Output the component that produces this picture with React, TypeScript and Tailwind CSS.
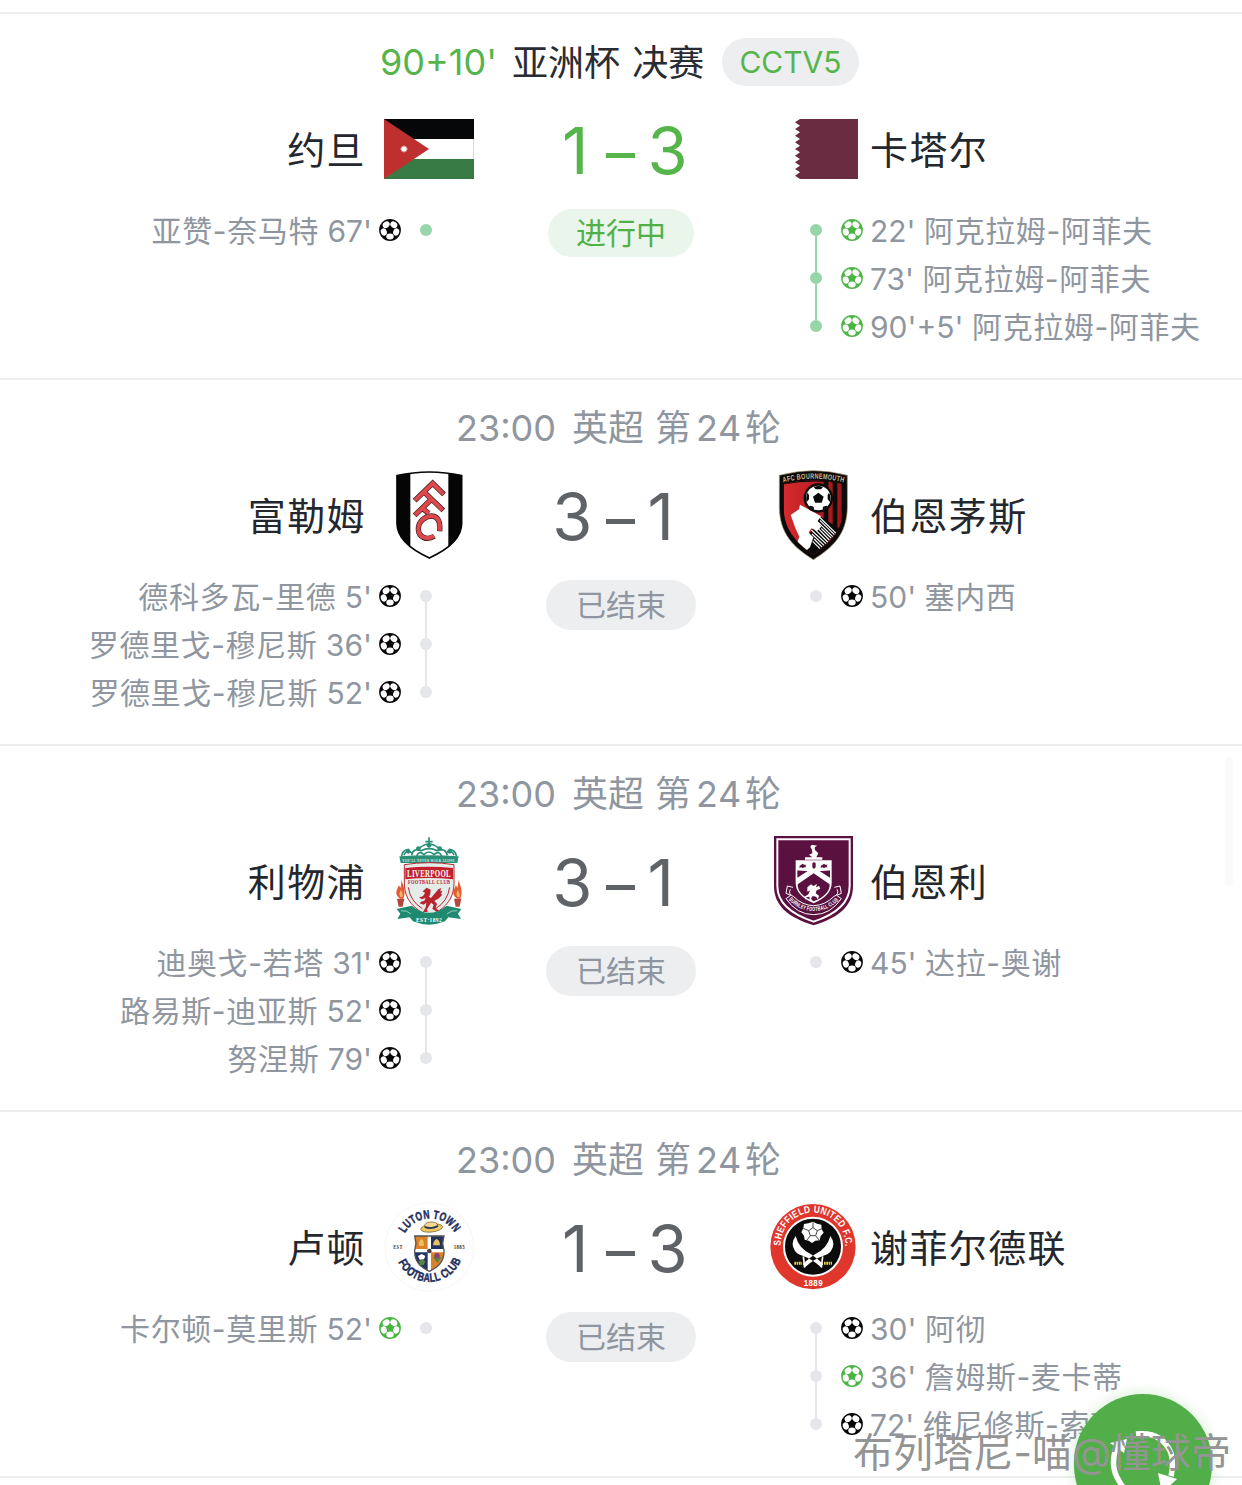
import type { ReactNode } from 'react';

type Goal = { minute: string; player: string; green?: boolean };
type Team = { name: string; logo: ReactNode; goals: Goal[] };
type Match = {
    id: number;
    live?: boolean;
    score: [string, string];
    home: Team;
    away: Team;
};

function Jordan() {
    return (
        <svg viewBox="42 222 270 270" className="h-[90px] w-[90px]">
            <path fill="#050708" d="M42 267h270v60H42z" />
            <path fill="#fff" d="M42 327h270v60H42z" />
            <path fill="#387a43" d="M42 387h270v60H42z" />
            <path stroke="#bbb" strokeWidth="2" d="M311 327v60" />
            <path fill="#be3030" d="M42 267l135 90-135 90z" />
            <path stroke="#fff" strokeWidth="4" d="M102 347v20M92 357h20M95 350l14 14M109 350l-14 14" />
            <circle cx="102" cy="357" r="6" fill="#fff" />
        </svg>
    );
}

function Qatar() {
    return (
        <svg viewBox="1194 222 270 270" className="h-[90px] w-[90px]">
            <path
                fill="#692c41"
                d="M1464 267H1290l-15 10 15 10-15 10 15 10-15 10 15 10-15 10 15 10-15 10 15 10-15 10 15 10-15 10 15 10-15 10 15 10-15 10 15 10H1464z"
            />
        </svg>
    );
}

function Fulham() {
    return (
        <svg viewBox="12 30 270 270" className="h-[90px] w-[90px]">
            <defs>
                <clipPath id="fulham">
                    <path d="M51 47Q100 36 148 36T245 47V190C245 236 205 268 148 294C91 268 51 236 51 190z" />
                </clipPath>
            </defs>
            <g clipPath="url(#fulham)">
                <path fill="#fff" d="M40 30h220v270H40z" />
                <path fill="#050505" d="M40 30h51v270H40zM205 30h51v270h-51z" />
            </g>
            <path
                fill="none"
                stroke="#050505"
                strokeWidth="5"
                d="M51 47Q100 36 148 36T245 47V190C245 236 205 268 148 294C91 268 51 236 51 190z"
            />
            <g fill="none">
                <path stroke="#3a2020" strokeWidth="16" d="M104 122L158 70L192 103M131 95L190 151M104 166L152 120M126 144L146 160" />
                <path stroke="#3a2020" strokeWidth="16" d="M163 229C140 243 116 231 115 208C114 184 136 168 155 168C174 169 182 185 179 214" />
                <path stroke="#e0474c" strokeWidth="12" d="M105 121L158 70L190 102M131 95L188 150M105 165L152 120M126 143L146 160" />
                <path stroke="#e0474c" strokeWidth="12" d="M162 228C140 242 116 231 115 208C114 184 136 168 155 168C174 169 182 185 179 212" />
            </g>
        </svg>
    );
}

function Bournemouth() {
    return (
        <svg viewBox="9 30 270 270" className="h-[90px] w-[90px]">
            <defs>
                <clipPath id="bmth">
                    <path d="M56 72Q145 50 235 72V140C235 210 196 248 145 284C94 248 56 210 56 140z" />
                </clipPath>
                <linearGradient id="bmthRed" x1="0" x2="1">
                    <stop offset="0" stopColor="#d92b2f" />
                    <stop offset="1" stopColor="#9c1519" />
                </linearGradient>
                <path id="bmthArc" d="M52 68Q147 44 240 68" />
            </defs>
            <path fill="#0b0a0a" stroke="#a99873" strokeWidth="2" d="M43 46Q145 18 247 46V140C247 220 205 262 145 299C85 262 43 220 43 140z" />
            <g clipPath="url(#bmth)">
                <path fill="url(#bmthRed)" d="M50 50h190v250H50z" />
                <path fill="#0b0a0a" d="M176 60h14v140h-14zM203 60h14v160h-14zM230 60h10v160h-10z" />
                <path fill="#0b0a0a" d="M50 50h190v22Q145 56 50 74z" />
                <path fill="#0b0a0a" d="M160 166l64 40-80 90-30-30z" />
                <path fill="#fff" d="M77 165l25-17 3-14 28 15 35 20-10 14 11 17-13 13-17-8-8 13 14 14-10 30-16 14-24-24 8-22-12-26z" />
                <path
                    stroke="#fff"
                    strokeWidth="3.500"
                    d="M163 171l50 49M165 181l43 43M160 187l43 43M169 205l29 29M160 206l33 34M148 206l40 40M139 210l44 41M141 222l36 34M147 237l24 24M143 244l22 22"
                />
            </g>
            <circle cx="160" cy="114" r="44" fill="#0b0a0a" />
            <circle cx="160" cy="114" r="37" fill="#fff" />
            <path
                fill="#0b0a0a"
                d="M160 98l16 12-6 18h-20l-6-18zM146 81q14-6 28 0l-6 7h-16zM192 98q7 12 3 28l-7-8v-13zM128 98q-7 12-3 28l7-8v-13zM136 137l10 3 1 9q-11-2-15-10zM184 137l-10 3-1 9q11-2 15-10z"
            />
            <text fill="#cdbb91" fontSize="23" fontWeight="700" className="font-['Liberation_Sans']">
                <textPath href="#bmthArc" startOffset="3" textLength="184" lengthAdjust="spacingAndGlyphs">AFC BOURNEMOUTH</textPath>
            </text>
        </svg>
    );
}

function Liverpool() {
    return (
        <svg viewBox="-3 18 270 270" className="h-[90px] w-[90px]">
            <g fill="none" stroke="#2a8f77" strokeWidth="5">
                <path d="M132 22v30M121 35h22M80 76Q84 52 108 62Q132 50 157 62Q181 52 187 76M57 76Q62 58 80 68M207 76Q202 58 185 68" />
                <path d="M95 78Q102 60 117 74Q132 58 147 74Q162 60 170 78M104 54Q132 30 160 54M50 78q2-18 22-20M214 78q-2-18-22-20" />
            </g>
            <g fill="#2a8f77">
                <circle cx="132" cy="46" r="7" />
                <circle cx="100" cy="56" r="7" />
                <circle cx="164" cy="56" r="7" />
                <circle cx="70" cy="64" r="7" />
                <circle cx="194" cy="64" r="7" />
            </g>
            <path fill="#2a8f77" d="M43 79Q132 72 221 79l-4 20H47z" />
            <text
                x="52"
                y="95"
                fill="#dff1ec"
                fontSize="15"
                fontWeight="700"
                textLength="158"
                lengthAdjust="spacingAndGlyphs"
                className="font-['Liberation_Serif']"
            >
                YOU'LL NEVER WALK ALONE
            </text>
            <path fill="#e4ecea" stroke="#b4272f" strokeWidth="3" d="M58 104Q132 92 207 104V160C207 210 175 240 132 258C90 240 58 210 58 160z" />
            <path fill="#c1202c" d="M61 114Q132 106 204 114v34Q132 140 61 148z" />
            <text
                x="66"
                y="142"
                fill="#fff"
                fontSize="32"
                fontWeight="700"
                textLength="132"
                lengthAdjust="spacingAndGlyphs"
                className="font-['Liberation_Serif']"
            >
                LIVERPOOL
            </text>
            <text
                x="69"
                y="163"
                fill="#c1202c"
                fontSize="20"
                fontWeight="700"
                textLength="127"
                lengthAdjust="spacingAndGlyphs"
                className="font-['Liberation_Serif']"
            >
                FOOTBALL CLUB
            </text>
            <path
                fill="#b9252f"
                d="M113 184l12-11 12 6-1 13-4 8 6 4 22-26 8-4-2 10 6-2-4 10 4 2-12 12-12 6 8 10-4 12 14 12-8 2-16-12 4-12-8-6-12 20 2 8h-14l8-14 2-14-8 6-12-4 4-5 10-3 4-8-12 4-8-6 8-2 6-4 4-8-8-4z"
            />
            <path fill="none" stroke="#c1202c" strokeWidth="3" d="M70 172Q76 214 112 236M194 172Q188 214 152 236" />
            {[47, 218].map((x) => (
                <g key={x} transform={`translate(${x} 0)`}>
                    <path fill="#e45b32" d="M-2 206C-22 190-10 180-5 165C0 176 0 180 2 150C10 172 16 186 8 206z" />
                    <path fill="#f3b263" d="M0 202q-8-10 1-22 8 14 4 22z" />
                    <path fill="#b5473a" d="M-11 206h22l-5 24h-12z" />
                </g>
            ))}
            <path fill="#1f8a70" d="M35 237l45-10Q132 270 185 227l44 10-10 14 9 16-38-5-10 12q-48 20-96 0l-10-12-37 5 9-16z" />
            <path fill="none" stroke="#b4dcd1" strokeWidth="2.500" d="M48 242q18-2 30 10M216 242q-18-2-30 10" />
            <text
                x="93"
                y="276"
                fill="#fff"
                fontSize="20"
                fontWeight="700"
                textLength="78"
                lengthAdjust="spacingAndGlyphs"
                className="font-['Liberation_Serif']"
            >
                EST·1892
            </text>
        </svg>
    );
}

function Burnley() {
    return (
        <svg viewBox="9 18 270 270" className="h-[90px] w-[90px]">
            <defs>
                <path id="burnleyArc" d="M68 206Q100 243 146 243T226 206" />
            </defs>
            <path fill="#5b1140" d="M27 18h237v150C264 228 222 262 146 286C70 262 27 228 27 168z" />
            <path fill="none" stroke="#fff" strokeWidth="6" d="M37 28h217v140C254 220 212 253 146 275C80 253 37 220 37 168z" />
            <path fill="#fff" d="M92 91h108v68q0 37-54 61-54-24-54-61z" />
            <path fill="#5b1140" d="M97 121l49-1 49 1v22l-49-31-49 31zM98 156l48-31 48 31v8q0 30-48 50-48-20-48-50z" />
            <path fill="#fff" d="M96 148l50-33 50 33v16l-50-34-50 34z" />
            <path fill="#fff" d="M97 96h98v25l-49 4-49-4z" />
            <path
                fill="#5b1140"
                d="M104 107l5-3 4-3 4 3h7l-3 4 3 4h-7l-4 3-4-3-6 1zM142 100l5-4 5 4v12l-5 5-5-5zM168 107l5-3 4-3 4 3h7l-3 4 3 4h-7l-4 3-4-3-6 1z"
            />
            <path
                fill="#fff"
                d="M136 50q4-9 12-4l9 1-8 5 1 8 10 10-6 12h-12l-10-8 10-4-1-10zM120 82h52v7h-52zM127 172l11-9 7 5 11-6-3 10 9-4 4 8-11 5-3 9 10 7-3 11-6-8-10-2-5 8 6 8-10-3-1-11-9 2-2 7-4-8 12-8 5-11-8 3z"
            />
            <path
                fill="none"
                stroke="#fff"
                strokeWidth="3"
                d="M84 172l-17-4-4 22 14 6-14 10q33 48 83 48t83-48l-14-10 14-6-4-22-17 4M76 178q-8 14 10 22 26 26 60 27 34-1 60-27 18-8 10-22"
            />
            <text fill="#fff" fontSize="18" fontWeight="700" className="font-['Liberation_Sans']">
                <textPath href="#burnleyArc" startOffset="4" textLength="170" lengthAdjust="spacingAndGlyphs">BURNLEY FOOTBALL CLUB</textPath>
            </text>
        </svg>
    );
}

function Luton() {
    return (
        <svg viewBox="12 6 270 270" className="h-[90px] w-[90px]">
            <defs>
                <path id="lutonTop" d="M74 101A86 86 0 0 1 226 101" />
                <path id="lutonBottom" d="M54 184A102 102 0 0 0 243 180" />
                <clipPath id="lutonShield">
                    <path d="M104 108h88l-4 22 4 22q2 42-44 62-46-20-44-62l4-22z" />
                </clipPath>
            </defs>
            <circle cx="148" cy="141" r="133" fill="#fff" stroke="#f1f1f2" strokeWidth="2" />
            <g fill="#1e2e5c" stroke="#1e2e5c" strokeWidth="1.500" fontSize="36" fontWeight="700" className="font-['Liberation_Sans']">
                <text>
                    <textPath href="#lutonTop" startOffset="1" textLength="182" lengthAdjust="spacingAndGlyphs">LUTON TOWN</textPath>
                </text>
                <text>
                    <textPath href="#lutonBottom" startOffset="2" textLength="240" lengthAdjust="spacingAndGlyphs">FOOTBALL CLUB</textPath>
                </text>
            </g>
            <g fill="#333" fontSize="17" fontWeight="700" className="font-['Liberation_Serif']">
                <text x="40" y="147" textLength="28" lengthAdjust="spacingAndGlyphs">EST</text>
                <text x="221" y="147" textLength="34" lengthAdjust="spacingAndGlyphs">1885</text>
            </g>
            <g clipPath="url(#lutonShield)">
                <path fill="#dd8129" d="M100 104h48v48h-48zM148 152h48v64h-48z" />
                <path fill="#22345f" d="M148 104h48v48h-48zM100 152h48v64h-48z" />
                <path stroke="#fff" strokeWidth="10" d="M148 104v114M100 152h96" />
            </g>
            <path fill="none" stroke="#555" strokeWidth="4" d="M104 108h88l-4 22 4 22q2 42-44 62-46-20-44-62l4-22z" />
            <path fill="#e8c05c" d="M117 138q-2-16 8-21 8 5 6 21zM159 136q2-17 11-19 9 2 10 19z" />
            <path fill="#fff" d="M114 168l11-6 11 6-4 10-13 1z" />
            <path fill="#598442" d="M116 184q10-9 20 0l-5 11h-10zM158 172q11-4 26 0l-11 17z" />
            <circle cx="171" cy="167" r="8" fill="#8b426e" />
            <circle cx="148" cy="153" r="7" fill="#4b3d35" />
            <ellipse cx="155" cy="84" rx="33" ry="12" fill="#efc85f" stroke="#695022" strokeWidth="2" transform="rotate(-7 155 84)" />
            <path fill="#f4da91" stroke="#695022" strokeWidth="2" d="M134 80q-1-13 18-14 19-1 22 11-19 10-40 3z" />
            <path fill="none" stroke="#263660" strokeWidth="5" d="M134 81q20 8 40-3" />
        </svg>
    );
}

function Sheffield() {
    return (
        <svg viewBox="18 21 270 270" className="h-[90px] w-[90px]">
            <defs>
                <path id="sheffTop" d="M56 154A97 97 0 1 1 248 169" />
            </defs>
            <circle cx="153" cy="155" r="128" fill="#df372c" />
            <circle cx="153" cy="155" r="87" fill="#0b0b0b" stroke="#fff" strokeWidth="6" />
            <text fill="#fff" fontSize="30" fontWeight="700" className="font-['Liberation_Sans']">
                <textPath href="#sheffTop" startOffset="2" textLength="312" lengthAdjust="spacingAndGlyphs">SHEFFIELD UNITED F.C.</textPath>
            </text>
            <text
                x="125"
                y="274"
                fill="#fff"
                fontSize="27"
                fontWeight="700"
                textLength="58"
                lengthAdjust="spacingAndGlyphs"
                className="font-['Liberation_Sans']"
            >
                1889
            </text>
            <path fill="#fff" d="M153 80l12 6 13 3 1 13 6 11-9 10-3 13-13 1-10 7-10-7-12-3-2-12-8-10 6-12 2-13 13-2z" />
            <path
                fill="none"
                stroke="#222"
                strokeWidth="2.500"
                d="M153 98l13 9-5 15h-16l-5-15zM153 98V82M166 107l16-7M161 122l10 13M145 122l-10 13M140 107l-16-7"
            />
            <path
                fill="#fff"
                d="M101 123Q84 146 99 168Q106 178 124 183Q152 193 176 216L184 207Q166 191 147 178Q110 160 101 123zM205 123Q222 146 207 168Q200 178 182 183Q154 193 130 216L122 207Q140 191 159 178Q196 160 205 123z"
            />
            <path stroke="#fff" strokeWidth="5" d="M124 184l4 34M182 184l-4 34" />
            <path stroke="#e6d437" strokeWidth="9" strokeDasharray="5 2" d="M97 205h23M186 205h24" />
        </svg>
    );
}

function Ball({ green }: { green?: boolean }) {
    return (
        <svg viewBox="-11 -11 22 22" className={`h-[22px] w-[22px] shrink-0 ${green ? 'text-[#4bb544]' : 'text-[#080808]'}`}>
            <circle r="10.900" fill="currentColor" />
            {[0, 72, 144, 216, 288].map((deg) => (
                <ellipse key={deg} transform={`rotate(${deg})`} cy="6.500" rx="3.700" ry="3" fill="#fff" />
            ))}
        </svg>
    );
}

function Goals({ goals, live, side }: { goals: Goal[]; live?: boolean; side: 'home' | 'away' }) {
    const dot = live ? 'bg-[#96d6a8]' : 'bg-[#e5e6ea]';
    return (
        <ul>
            {goals.map((goal, i) => (
                <li
                    key={i}
                    className={`flex h-12 items-center text-[30px] leading-[48px] whitespace-nowrap text-[#8f96a0] ${side === 'home' ? 'flex-row-reverse pr-[42px]' : 'pl-[42px]'}`}
                >
                    <span className="flex h-12 w-3 shrink-0 flex-col items-center">
                        <i className={`w-0.5 flex-1 ${i > 0 ? dot : ''}`} />
                        <i className={`h-3 w-3 rounded-full ${dot}`} />
                        <i className={`w-0.5 flex-1 ${i < goals.length - 1 ? dot : ''}`} />
                    </span>
                    <span className={side === 'home' ? 'mr-[19px]' : 'ml-[19px]'}>
                        <Ball green={goal.green} />
                    </span>
                    {side === 'home' ? (
                        <span className="mr-[7px] pt-px">
                            <span className="tracking-[0.6px]">{goal.player}</span> {goal.minute}
                        </span>
                    ) : (
                        <span className="ml-[7px] pt-px">
                            {goal.minute} <span className="tracking-[0.6px]">{goal.player}</span>
                        </span>
                    )}
                </li>
            ))}
        </ul>
    );
}

const matches: Match[] = [
    {
        id: 1,
        live: true,
        score: ['1', '3'],
        home: { name: '约旦', logo: <Jordan />, goals: [{ minute: "67'", player: '亚赞-奈马特' }] },
        away: {
            name: '卡塔尔',
            logo: <Qatar />,
            goals: [
                { minute: "22'", player: '阿克拉姆-阿菲夫', green: true },
                { minute: "73'", player: '阿克拉姆-阿菲夫', green: true },
                { minute: "90'+5'", player: '阿克拉姆-阿菲夫', green: true },
            ],
        },
    },
    {
        id: 2,
        score: ['3', '1'],
        home: {
            name: '富勒姆',
            logo: <Fulham />,
            goals: [
                { minute: "5'", player: '德科多瓦-里德' },
                { minute: "36'", player: '罗德里戈-穆尼斯' },
                { minute: "52'", player: '罗德里戈-穆尼斯' },
            ],
        },
        away: { name: '伯恩茅斯', logo: <Bournemouth />, goals: [{ minute: "50'", player: '塞内西' }] },
    },
    {
        id: 3,
        score: ['3', '1'],
        home: {
            name: '利物浦',
            logo: <Liverpool />,
            goals: [
                { minute: "31'", player: '迪奥戈-若塔' },
                { minute: "52'", player: '路易斯-迪亚斯' },
                { minute: "79'", player: '努涅斯' },
            ],
        },
        away: { name: '伯恩利', logo: <Burnley />, goals: [{ minute: "45'", player: '达拉-奥谢' }] },
    },
    {
        id: 4,
        score: ['1', '3'],
        home: { name: '卢顿', logo: <Luton />, goals: [{ minute: "52'", player: '卡尔顿-莫里斯', green: true }] },
        away: {
            name: '谢菲尔德联',
            logo: <Sheffield />,
            goals: [
                { minute: "30'", player: '阿彻' },
                { minute: "36'", player: '詹姆斯-麦卡蒂', green: true },
                { minute: "72'", player: '维尼修斯-索萨' },
            ],
        },
    },
];

function MatchCard({ match }: { match: Match }) {
    const { live, home, away, score } = match;
    return (
        <section className="h-[366px] border-t-2 border-[#eeeeef]">
            {/* Kick-off and round */}
            {live ? (
                <div className="flex h-24 items-center pl-[380px] text-4xl whitespace-nowrap">
                    <span className="w-[132px] text-[#55b54b]">90+10'</span>
                    <span className="w-[210px] pt-0.5 text-[#292c32] [word-spacing:2px]">亚洲杯 决赛</span>
                    <span className="flex h-12 w-[137px] items-center justify-center rounded-full bg-[#edeef0] pt-0.5 text-[30px] text-[#55b54b]">
                        CCTV5
                    </span>
                </div>
            ) : (
                <div className="flex h-24 items-center pl-[456px] text-4xl whitespace-nowrap text-[#8f96a0]">
                    <span className="w-[116px]">23:00</span>
                    <span className="w-[83px]">英超</span>
                    <span>第</span>
                    <span className="ml-[5px] w-[49px] tracking-[0.5px]">24</span>
                    <span>轮</span>
                </div>
            )}

            {/* Teams and score */}
            <div className="-mt-1.5 grid h-[90px] grid-cols-[474px_294px_474px] items-center text-[38px] tracking-[1.4px] whitespace-nowrap text-[#24272d]">
                <div className="flex items-center justify-end gap-[18px]">
                    <span className="pt-0.5">{home.name}</span>
                    {home.logo}
                </div>
                <div
                    className={`flex items-center justify-center text-[65px] leading-none tracking-normal ${live ? 'text-[#55b54b]' : 'text-[#5f6367]'}`}
                >
                    <span className={`w-[59px] pt-0.5 text-right ${score[0] === '1' ? 'pr-[17px]' : 'pr-[13px]'}`}>{score[0]}</span>
                    <i className={`mt-3 h-[5px] w-[29px] ${live ? 'bg-[#55b54b]' : 'bg-[#5f6367]'}`} />
                    <span className="w-[61px] pt-0.5 pl-[13px]">{score[1]}</span>
                </div>
                <div className="flex items-center gap-[12px]">
                    {away.logo}
                    <span className="pt-0.5">{away.name}</span>
                </div>
            </div>

            {/* Goals and status */}
            <div className="mt-3 grid grid-cols-[474px_294px_474px]">
                <Goals goals={home.goals} live={live} side="home" />
                <div className="flex justify-center">
                    {live ? (
                        <span className="mt-[3px] flex h-12 w-[146px] items-center justify-center rounded-full bg-[#eaf5eb] pt-px text-[30px] text-[#4fb147]">
                            进行中
                        </span>
                    ) : (
                        <span className="mt-2 flex h-[50px] w-[150px] items-center justify-center rounded-full bg-[#edeef0] pt-px text-[30px] text-[#8f96a0]">
                            已结束
                        </span>
                    )}
                </div>
                <Goals goals={away.goals} live={live} side="away" />
            </div>
        </section>
    );
}

export default function App() {
    return (
        <main className="relative h-[1485px] w-[1242px] overflow-hidden bg-white pt-3 font-[Inter,'Noto_Sans_CJK_SC',sans-serif]">
            {matches.map((match) => (
                <MatchCard key={match.id} match={match} />
            ))}
            <div className="border-t-2 border-[#eeeeef]" />

            {/* Scroll thumb */}
            <div className="absolute top-[757px] left-[1225px] h-[129px] w-2 rounded-full bg-[#fafafa]" />

            {/* Refresh button */}
            <button className="absolute top-[1394px] left-[1074px] h-[140px] w-[138px] rounded-full bg-[#52ae49] shadow-[0_0_14px_rgba(82,174,73,0.25)]">
                <svg viewBox="0 0 138 140" className="h-full w-full" fill="none">
                    <path stroke="#fff" strokeWidth="5.500" d="M62 40Q88 37 97 59Q100 70 97 82M43 52Q35 71 45 87Q51 98 62 102" />
                    <path fill="#fff" d="M84 79l19 6-15 14zM36 49l17-4-3 14z" />
                </svg>
            </button>

            <div className="absolute top-[1423px] left-[853px] text-[40px] leading-[60px] tracking-[0.1px] whitespace-nowrap text-[#949494]">
                布列塔尼-喵@懂球帝
            </div>
        </main>
    );
}
